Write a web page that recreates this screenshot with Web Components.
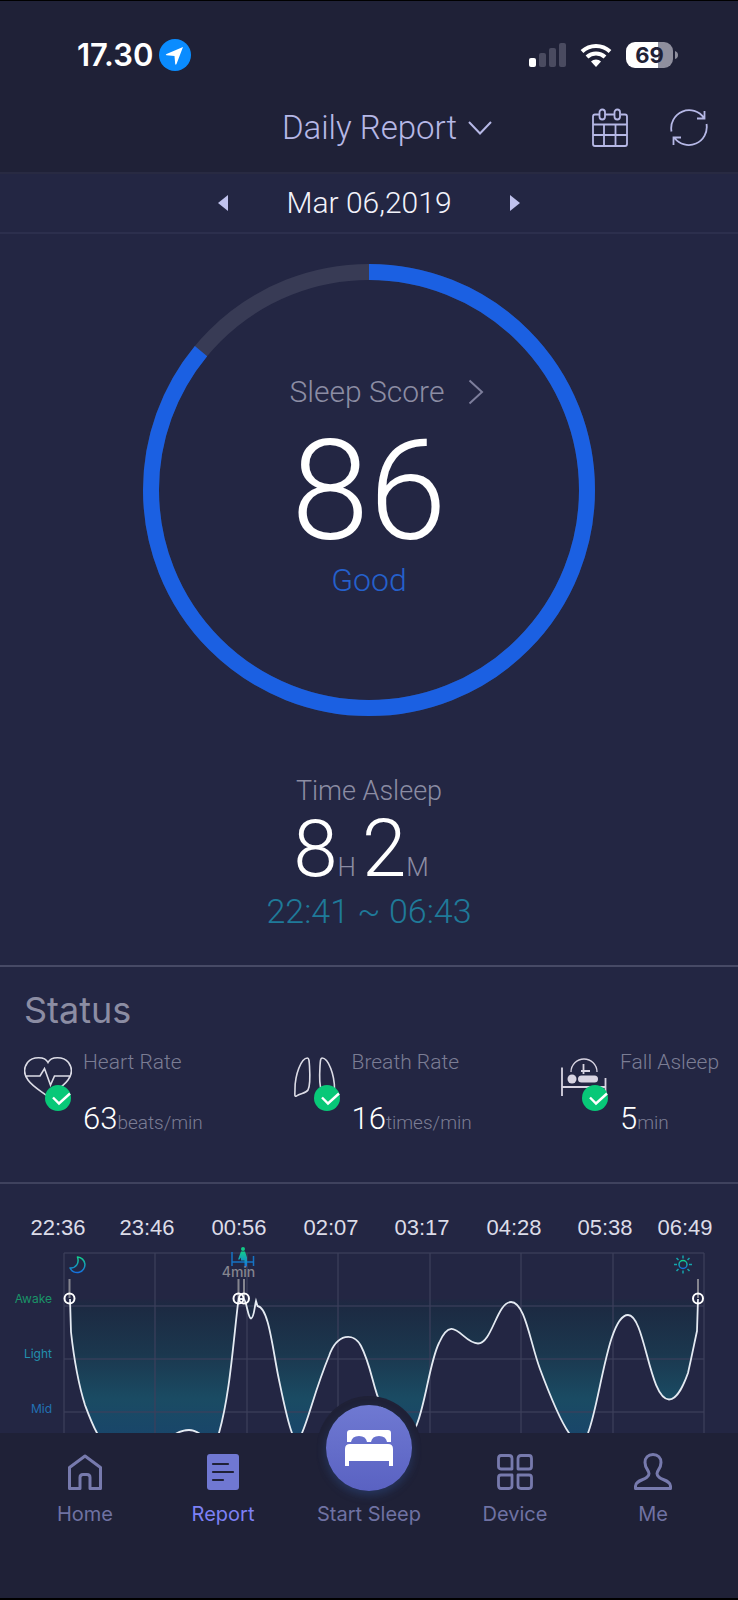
<!DOCTYPE html>
<html lang="en">
<head>
<meta charset="utf-8">
<meta name="viewport" content="width=device-width, initial-scale=1">
<title>Daily Report</title>
<style>
  body {
    margin: 0;
    background: #000;
  }
</style>
</head>
<body>
<sleep-app></sleep-app>

<script>
// helper: attach an open shadow root and fill it from a template
function define(name, html, setup) {
  const tpl = document.createElement("template");
  tpl.innerHTML = html;
  customElements.define(name, class extends HTMLElement {
    constructor() {
      super();
      this.attachShadow({ mode: "open" });
      this.shadowRoot.append(tpl.content.cloneNode(true));
    }
    connectedCallback() {
      if (setup) setup(this, this.shadowRoot);
    }
  });
}

const svg = (size, body) =>
  `<svg width="${size[0]}" height="${size[1]}" viewBox="0 0 ${size[0]} ${size[1]}" fill="none" aria-hidden="true">${body}</svg>`;

define("phone-status", `
<style>
:host {
  display: flex;
  align-items: center;
  justify-content: space-between;
  height: 56px;
  padding: 26px 60px 0 77px;
  color: #fff;
}
.time {
  display: flex;
  align-items: center;
  gap: 6px;
  font: 600 31px/36px Inter, "Liberation Sans", sans-serif;
}
.signals {
  display: flex;
  align-items: center;
  gap: 14px;
}
.battery {
  display: flex;
  align-items: center;
  gap: 2px;
}
.level {
  width: 47px;
  border-radius: 9px;
  background: linear-gradient(90deg, #fff 69%, #8f8f9e 69%);
  color: #1f2137;
  text-align: center;
  font: 700 22px/26px Inter, "Liberation Sans", sans-serif;
}
</style>
<div class="time">
  <span>17.30</span>
  ${svg([32, 32], `<circle cx="16" cy="16" r="16" fill="#0a8cff"/><path d="M24 8 17.500 25q-.8 1.500-1.300 0L15.500 17 7.500 16.300q-1.500-.5 0-1.300z" fill="#fff"/>`)}
</div>
<div class="signals">
  ${svg([37, 24], `
    <rect x="0" y="15" width="7" height="9" rx="2" fill="#fff"/>
    <rect x="10" y="10" width="7" height="14" rx="2" fill="#4a4b60"/>
    <rect x="20" y="5" width="7" height="19" rx="2" fill="#4a4b60"/>
    <rect x="30" y="0" width="7" height="24" rx="2" fill="#4a4b60"/>`)}
  ${svg([32, 24], `
    <path d="M2 8.500a20.500 20.500 0 0 1 28 0" stroke="#fff" stroke-width="4"/>
    <path d="M7 14a13 13 0 0 1 18 0" stroke="#fff" stroke-width="4"/>
    <path d="M16 24 11 18.500a7 7 0 0 1 10 0z" fill="#fff"/>`)}
  <div class="battery">
    <div class="level">69</div>
    ${svg([3, 10], `<path d="M0 1q3 1 3 4t-3 4z" fill="#8f8f9e"/>`)}
  </div>
</div>`);

define("report-header", `
<style>
:host {
  display: grid;
  grid-template-columns: 1fr auto 1fr;
  align-items: center;
  height: 89px;
  border-bottom: 2px solid #282a42;
}
button {
  display: flex;
  align-items: center;
  gap: 11px;
  padding: 0;
  border: 0;
  background: none;
  color: #b6b8e6;
  font: inherit;
  font-size: 33px;
  line-height: 40px;
}
.title {
  grid-column: 2;
  padding-left: 36px;
}
.actions {
  display: flex;
  justify-content: flex-end;
  gap: 42px;
  padding-right: 30px;
}
</style>
<button class="title">Daily Report
  ${svg([24, 16], `<path d="M1 2 12 13.500 23 2" stroke="#b6b8e6" stroke-width="2"/>`)}
</button>
<div class="actions">
  <button aria-label="Calendar">
    ${svg([36, 40], `<g stroke="#b6b8e6" stroke-width="1.800">
      <path d="M7 6.500H3q-2 0-2 2V36q0 2 2 2h30q2 0 2-2V8.500q0-2-2-2h-4M13 6.500h9M1 16.500h34M1 27h34M12 16.500V38M23.500 16.500V38"/>
      <rect x="7.500" y="1.500" width="5.500" height="10" rx="2.700"/>
      <rect x="22.500" y="1.500" width="5.500" height="10" rx="2.700"/></g>`)}
  </button>
  <button aria-label="Refresh">
    ${svg([38, 40], `<path d="M1.500 23.500A18 18 0 0 1 34 10M34.500 3v7.500H27M36.500 16A18 18 0 0 1 4.500 30M3.500 37v-7.500H11" stroke="#b6b8e6" stroke-width="1.800"/>`)}
  </button>
</div>`);

define("date-bar", `
<style>
:host {
  display: flex;
  align-items: center;
  justify-content: center;
  gap: 48px;
  height: 58px;
  border-bottom: 2px solid #2c2f4d;
  color: #f2f2fa;
  font-size: 30px;
  line-height: 36px;
}
span {
  padding: 0 10px;
}
button {
  display: flex;
  padding: 0;
  border: 0;
  background: none;
}
</style>
<button aria-label="Previous day">${svg([10, 16], `<path d="M10 0v16L0 8z" fill="#c0c2ee"/>`)}</button>
<span><slot></slot></span>
<button aria-label="Next day">${svg([10, 16], `<path d="M0 0v16l10-8z" fill="#c0c2ee"/>`)}</button>`);

define("score-ring", `
<style>
:host {
  display: grid;
  justify-items: center;
  padding-top: 29px;
}
svg.ring, .inside {
  grid-area: 1 / 1;
}
.inside {
  display: flex;
  flex-direction: column;
  align-items: center;
  padding-top: 109px;
}
button {
  display: flex;
  align-items: center;
  gap: 24px;
  padding: 0 0 0 36px;
  border: 0;
  background: none;
  color: #8c8da3;
  font: inherit;
  font-size: 30px;
  line-height: 40px;
}
.score {
  margin-top: 9px;
  color: #fff;
  font-size: 140px;
  line-height: 140px;
}
.grade {
  color: #2560cc;
  font-size: 32px;
  line-height: 38px;
}
</style>
<svg class="ring" width="454" height="454" viewBox="0 0 454 454" fill="none" stroke-width="16" aria-hidden="true">
  <circle cx="227" cy="227" r="218" stroke="#383b55"/>
  <circle id="arc" cx="227" cy="227" r="218" stroke="#1b60e2" pathLength="100" transform="rotate(-90 227 227)"/>
</svg>
<div class="inside">
  <button>Sleep Score ${svg([16, 26], `<path d="M1.500 1.500 14 13 1.500 24.500" stroke="#7d7e9c" stroke-width="2"/>`)}</button>
  <div class="score"></div>
  <div class="grade"><slot></slot></div>
</div>`, (el, root) => {
  const score = el.getAttribute("score");
  root.querySelector(".score").textContent = score;
  root.getElementById("arc").setAttribute("stroke-dasharray", `${score} 100`);
});

define("time-asleep", `
<style>
:host {
  display: flex;
  flex-direction: column;
  align-items: center;
  padding: 56px 0 32px;
  border-bottom: 2px solid #474a66;
  color: #8c8da3;
}
.label {
  font-size: 27px;
  line-height: 36px;
}
.duration {
  display: flex;
  align-items: baseline;
  padding-right: 16px;
  font-size: 26px;
  line-height: 32px;
}
b {
  color: #fff;
  font-size: 80px;
  font-weight: inherit;
  line-height: 80px;
}
i {
  margin-right: 6px;
  font-style: normal;
}
.range {
  color: #1f7a99;
  font-size: 34px;
  line-height: 44px;
}
</style>
<div class="label">Time Asleep</div>
<div class="duration"><b>8</b><i>H</i><b>2</b>M</div>
<div class="range">22:41 ~ 06:43</div>`);

define("status-item", `
<style>
:host {
  display: flex;
  gap: 12px;
}
.icon {
  position: relative;
  width: 47px;
  height: 54px;
}
.check {
  position: absolute;
  right: 0;
  bottom: 0;
}
.label {
  color: #7b7d94;
  font-size: 21px;
  line-height: 26px;
  white-space: nowrap;
  margin-top: -8px;
}
.value {
  display: flex;
  align-items: baseline;
  margin-top: 24px;
  color: #7b7d94;
  font-size: 19px;
  line-height: 24px;
  white-space: nowrap;
}
b {
  color: #fff;
  font-size: 31px;
  font-weight: inherit;
  line-height: 40px;
}
</style>
<div class="icon">
  <slot name="icon"></slot>
  <svg class="check" width="26" height="26" viewBox="0 0 26 26" fill="none" aria-hidden="true"><circle cx="13" cy="13" r="13" fill="#08c878"/><path d="m8 12.500 6 6L25 8.500" stroke="#fff" stroke-width="2.400"/></svg>
</div>
<div>
  <div class="label"></div>
  <div class="value"><b></b><slot></slot></div>
</div>`, (el, root) => {
  root.querySelector(".label").textContent = el.getAttribute("label");
  root.querySelector("b").textContent = el.getAttribute("value");
});

define("status-panel", `
<style>
:host {
  display: block;
  padding: 21px 0 43px 24px;
  border-bottom: 2px solid #3f425e;
}
h2 {
  margin: 0 0 25px;
  color: #8c8da3;
  font: 400 36px/44px Inter, "Liberation Sans", sans-serif;
}
.items {
  display: grid;
  grid-template-columns: 1fr 1fr 177px;
}
</style>
<h2>Status</h2>
<div class="items">
  <status-item label="Heart Rate" value="63">
    <svg slot="icon" width="48" height="42" viewBox="0 0 48 42" fill="none" stroke="#dcdce6" stroke-width="1.600" aria-hidden="true"><path d="M24 5.500C21-.5 9-1 3.500 5.500-.5 11-.5 17 4 23c5 7 13 11 20 16.500C31 34 39 30 44 23c4.500-6 4.500-12 .5-17.500C39-1 27-.5 24 5.500zM2 19h14l4.500-7.500 6 16.500 4-9H46"/></svg>
    beats/min
  </status-item>
  <status-item label="Breath Rate" value="16">
    <svg slot="icon" width="48" height="42" viewBox="2 0 48 42" fill="none" stroke="#dcdce6" stroke-width="1.600" aria-hidden="true"><path d="M16.500 1C10 1 4 18 4 32c0 5-1 8 1.500 7C9 36 15 36.500 17 33c2-4 2-16 1.500-24-.3-5-.5-8-2-8zM31 1c6.500 0 12.500 17 12.500 31 0 5 1 8-1.500 7-3.500-3-9.500-2.500-11.500-6-2-4-2-16-1.500-24 .3-5 .5-8 2-8z"/></svg>
    times/min
  </status-item>
  <status-item label="Fall Asleep" value="5">
    <svg slot="icon" width="48" height="42" viewBox="2 0 48 42" fill="none" stroke="#d8d4e2" stroke-width="1.800" aria-hidden="true"><path d="M12 15a13 13 0 0 1 26 0" stroke-width="1.300"/><path d="M24.500 7v10M22 14h9"/><circle cx="13" cy="22" r="4.500" fill="#d8d4e2" stroke="none"/><rect x="19" y="18.500" width="20" height="7" rx="3.500" fill="#d8d4e2" stroke="none"/><path d="M3 10.500V39M3 30h43.500M46.500 21v17"/></svg>
    min
  </status-item>
</div>`);

define("sleep-chart", `
<style>
:host {
  display: block;
}
svg {
  display: block;
  width: 100%;
}
.times text {
  font: 22px "Liberation Sans", sans-serif;
  fill: #dcdce8;
  text-anchor: middle;
}
.levels text {
  font: 12px Inter, "Liberation Sans", sans-serif;
  text-anchor: end;
}
</style>
<svg viewBox="0 1185 738 300" role="img" aria-label="Sleep stages through the night">
  <defs>
    <linearGradient id="depth" gradientUnits="userSpaceOnUse" x1="0" y1="1297" x2="0" y2="1460">
      <stop offset="0" stop-color="#1c2a42" stop-opacity="0"/>
      <stop offset=".07" stop-color="#1c2a42"/>
      <stop offset=".35" stop-color="#1b374e"/>
      <stop offset=".63" stop-color="#1a4b63"/>
      <stop offset=".85" stop-color="#19466a"/>
      <stop offset="1" stop-color="#19406e"/>
    </linearGradient>
    <linearGradient id="mint" x1="0" y1="0" x2="0" y2="1">
      <stop offset="0" stop-color="#12d08c"/>
      <stop offset="1" stop-color="#1670e0"/>
    </linearGradient>
  </defs>
  <g class="times"></g>
  <path id="area" fill="url(#depth)"/>
  <g id="grid" stroke="#3d405c" stroke-opacity=".8" stroke-width="1.500"></g>
  <path id="line" fill="none" stroke="#e4eaf2" stroke-width="1.800"/>
  <g stroke="#85858f" stroke-width="2">
    <path d="M69.500 1280v19M238.500 1280v19M244 1280v19M698 1280v19"/>
  </g>
  <g fill="none" stroke="#fff" stroke-width="2">
    <circle cx="69.500" cy="1299.500" r="5"/>
    <circle cx="238.500" cy="1299.500" r="5"/>
    <circle cx="244" cy="1299.500" r="5"/>
    <circle cx="698" cy="1299.500" r="5"/>
  </g>
  <path d="M77.500 1258a7.800 7.800 0 1 1-7.500 11c6 .5 9.500-5 7.500-11z" fill="none" stroke="url(#mint)" stroke-width="1.500" stroke-linejoin="round"/>
  <g stroke="url(#mint)" stroke-width="1.500" fill="none">
    <circle cx="683" cy="1265.500" r="4"/>
    <path d="M683 1256.500v3M683 1271.500v3M674 1265.500h3M689 1265.500h3M676.500 1259l2 2M687.500 1270l2 2M676.500 1272l2-2M687.500 1261l2-2" stroke="#15a5ac"/>
  </g>
  <path d="M232 1253v14M253.500 1257v10M232 1263h21.500" stroke="#1673c4" stroke-width="1.500"/>
  <circle cx="243" cy="1250" r="2" fill="#12c886"/>
  <path d="M241 1252.500h4l2 6v9h-2.500v-6h-3.500v-3l-1.500 2h-1.500z" fill="url(#mint)"/>
  <text x="238.500" y="1278" text-anchor="middle" fill="#85858f" font-family="Inter, sans-serif" font-size="14" font-weight="500">4min</text>
  <g class="levels">
    <text x="52" y="1304" fill="#1a9468">Awake</text>
    <text x="52" y="1359" fill="#2290ae">Light</text>
    <text x="52" y="1414" fill="#2272b4">Mid</text>
  </g>
</svg>`, (el, root) => {
  const curve = "M70 1300 71 1333C74 1360 79 1387 85 1406 88 1414 92 1425 97 1434"
    + " C106 1452 120 1460 140 1455 160 1450 172 1431 189 1431 205 1431 208 1452 219 1434"
    + " C230 1395 233 1345 238.500 1300H244"
    + " C247 1304 248 1319 251 1319.500 254 1319 254.500 1308 256 1302L257.500 1307C268 1308 272 1345 278 1376"
    + " C283 1400 287 1421 292 1434 296 1444 298 1444 302 1434 310 1415 315 1391 329 1357"
    + " C337 1334 354 1333 361 1347 371 1366 373 1389 381 1406 391 1447 404 1460 417 1425"
    + " C426 1402 430 1362 439 1344 453 1312 462 1344.500 478 1344.500 492 1344.500 497 1303 511 1303"
    + " C525 1303 530 1343 540 1370 549 1394 559 1420 569 1434 577 1448 582 1448 588 1434"
    + " C600 1404 608 1316 628 1316 645 1316 649 1400 669 1400.500 678 1400 684 1385 688 1374"
    + " C692 1356 694 1346 697 1332L698 1300";
  root.getElementById("line").setAttribute("d", curve);
  root.getElementById("area").setAttribute("d", curve + "Z");

  const columns = [64, 155, 247, 338, 430, 521, 613, 704];
  const rows = [1254, 1307, 1360, 1413];
  root.getElementById("grid").innerHTML =
    columns.map((x) => `<path d="M${x} 1254V1470"/>`).join("") +
    rows.map((y) => `<path d="M64 ${y}H704"/>`).join("");

  const times = [[58, "22:36"], [147, "23:46"], [239, "00:56"], [331, "02:07"],
    [422, "03:17"], [514, "04:28"], [605, "05:38"], [685, "06:49"]];
  root.querySelector(".times").innerHTML =
    times.map(([x, t]) => `<text x="${x}" y="1236">${t}</text>`).join("");
});

define("nav-item", `
<style>
:host {
  display: block;
}
a {
  display: flex;
  flex-direction: column;
  align-items: center;
  gap: 9px;
  color: #6f72a3;
  font: 400 20px/28px Inter, "Liberation Sans", sans-serif;
  text-decoration: none;
  white-space: nowrap;
}
:host([active]) a {
  color: #7d80f5;
}
</style>
<a href="#"><slot name="icon"></slot><span><slot></slot></span></a>`);

define("bottom-nav", `
<style>
:host {
  display: grid;
  grid-template-columns: 1fr 1fr 154px 1fr 1fr;
  align-items: end;
  height: 95px;
  padding: 0 16px 70px;
  background: #1f2137;
}
/* the row is shorter than the bar, so the disc rises above its top edge */
nav-item {
  align-self: start;
  padding-top: 20px;
}
.start {
  padding: 0;
  margin-top: -28px;
}
.disc {
  display: grid;
  place-items: center;
  width: 86px;
  height: 86px;
  border-radius: 50%;
  background: linear-gradient(#6f79d2, #5a62c2);
  box-shadow: 0 4px 10px #31579a66, 0 0 0 9px #1f2137;
}
</style>
<nav-item>
  <svg slot="icon" width="38" height="38" viewBox="0 0 38 38" fill="none" stroke="#777aad" stroke-width="3" stroke-linejoin="round" aria-hidden="true"><path d="M19 3 3.500 14.500v21H14V24.500q0-3 3-3h4q3 0 3 3v11h10.500v-21z"/></svg>
  Home
</nav-item>
<nav-item active>
  <svg slot="icon" width="38" height="38" viewBox="0 0 38 38" fill="none" aria-hidden="true"><rect x="3" y="1" width="32" height="36" rx="3" fill="#7078d2"/><path d="M9 11h15M9 19h20M9 27h10" stroke="#1f2137" stroke-width="2.200" stroke-linecap="round"/></svg>
  Report
</nav-item>
<nav-item class="start">
  <div slot="icon" class="disc">
    <svg width="50" height="38" viewBox="0 0 50 38" fill="#fff" aria-hidden="true"><path d="M3 13V4q0-3 3-3h38q3 0 3 3v9h-4q-1-6-8-6-7 0-8 6h-4q-1-6-8-6-7 0-8 6z"/><path d="M1 37V20q0-5 5-5h38q5 0 5 5v17h-4v-5H5v5z"/></svg>
  </div>
  Start Sleep
</nav-item>
<nav-item>
  <svg slot="icon" width="38" height="38" viewBox="0 0 38 38" fill="none" stroke="#777aad" stroke-width="2.800" stroke-linejoin="round" aria-hidden="true"><path d="M5 2.500h8q3 0 3 3V16H5q-2.500 0-2.500-2.500v-8q0-3 2.500-3zM25 2.500h8q2.500 0 2.500 3v8q0 2.500-2.500 2.500H22V5.500q0-3 3-3zM5 22h11v10.500q0 3-3 3H5q-2.500 0-2.500-3v-8Q2.500 22 5 22zM22 22h11q2.500 0 2.500 2.500v8q0 3-2.500 3h-8q-3 0-3-3z"/></svg>
  Device
</nav-item>
<nav-item>
  <svg slot="icon" width="38" height="38" viewBox="0 0 38 38" fill="none" stroke="#777aad" stroke-width="3" stroke-linejoin="round" aria-hidden="true"><path d="M19 1.500c-5 0-8 3.500-8 8 0 6 4 8 4 11 0 7-13.500 5.500-13.500 12.500v2.500h35V33c0-7-13.500-5.500-13.500-12.500 0-3 4-5 4-11 0-4.500-3-8-8-8z"/></svg>
  Me
</nav-item>`);

define("sleep-app", `
<style>
:host {
  box-sizing: border-box;
  display: flex;
  flex-direction: column;
  height: 100vh;
  border: solid #000;
  border-width: 1px 0 2px;
  background: #232643;
  font: 300 16px Roboto, "Liberation Sans", sans-serif;
}
header {
  background: #1f2137;
}
main {
  flex: 1;
  min-height: 0;
  overflow-y: auto;
  scrollbar-width: none;
}
</style>
<header>
  <phone-status></phone-status>
  <report-header></report-header>
</header>
<main>
  <date-bar>Mar 06,2019</date-bar>
  <score-ring score="86">Good</score-ring>
  <time-asleep></time-asleep>
  <status-panel></status-panel>
  <sleep-chart></sleep-chart>
</main>
<bottom-nav></bottom-nav>`);
</script>
</body>
</html>
